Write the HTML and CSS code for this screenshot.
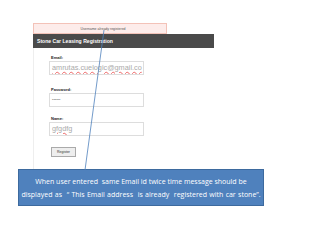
FILE: index.html
```html
<!DOCTYPE html>
<html>
<head>
<meta charset="utf-8">
<link rel="stylesheet" href="styles.css">
</head>
<body>
<div class="page">
  <div class="app">
    <div class="alert">Username already registered</div>
    <div class="header">Stone Car Leasing Registration</div>
    <div class="form">
      <div class="field">
        <div class="label">Email:</div>
        <div class="input"><span class="spell">amrutas.cuelogic@gmail.co</span></div>
      </div>
      <div class="field">
        <div class="label">Password:</div>
        <div class="input pw">••••••</div>
      </div>
      <div class="field">
        <div class="label">Name:</div>
        <div class="input"><span class="spell">gfgdfg</span></div>
      </div>
      <div class="btn">Register</div>
    </div>
  </div>
  <div class="note">When user entered&nbsp; same Email id twice time message should be<br><span class="wide">displayed as&nbsp; “ This Email address&nbsp; is already&nbsp; registered with car stone”.</span></div>
  <svg class="pointer" width="320" height="240" viewBox="0 0 320 240"><line x1="104" y1="30" x2="85" y2="170" stroke="#4f81bd" stroke-width="0.8"/></svg>
</div>
</body>
</html>
```
FILE: styles.css
```css
* { box-sizing: border-box; }
html, body { margin: 0; padding: 0; background: #fff; }
.page { position: relative; width: 320px; height: 240px; padding: 23px 0 0 0; font-family: "Liberation Sans", Arial, sans-serif; }
.app { margin-left: 33px; width: 181px; }
.alert { width: 134px; height: 11px; background: #fdecea; border: 1px solid #f3c2b8; font-size: 3.5px; color: #555; text-align: center; line-height: 11px; padding-left: 6px; }
.header { height: 14px; background: #4a4a4a; color: #fff; font-weight: bold; font-size: 5.1px; line-height: 14px; padding-left: 4px; }
.form { border-left: 1px solid #eee; padding: 7px 0 6px 15px; height: 121px; }
.field { margin-bottom: 12px; }
.field:nth-child(2) { margin-bottom: 9px; }
.label { font-size: 4px; font-weight: bold; color: #222; height: 6px; line-height: 6px; margin-left: 2px; }
.input { width: 95px; height: 14px; border: 1px solid #ddd; font-size: 7.3px; color: #aaa; line-height: 12px; padding-left: 2px; white-space: nowrap; overflow: hidden; }
.pw { font-size: 4px; color: #888; }
.spell { text-decoration: underline wavy #e66; text-decoration-thickness: 0.4px; text-underline-offset: 1px; }
.btn { margin-left: 2px; margin-top: -1px; width: 25px; height: 10px; border: 1px solid #aaa; background: #eee; font-size: 3.5px; line-height: 8px; text-align: center; color: #333; }
.note { margin: 0 0 0 18px; width: 246px; height: 37px; background: #4f81bd; border: 1px solid #3d6a9e; color: #fff; font-family: "Open Sans", sans-serif; font-size: 7px; line-height: 13px; text-align: center; padding-top: 5px; white-space: nowrap; }
.wide { word-spacing: 0.5px; }
.pointer { position: absolute; left: 0; top: 0; pointer-events: none; }
```
